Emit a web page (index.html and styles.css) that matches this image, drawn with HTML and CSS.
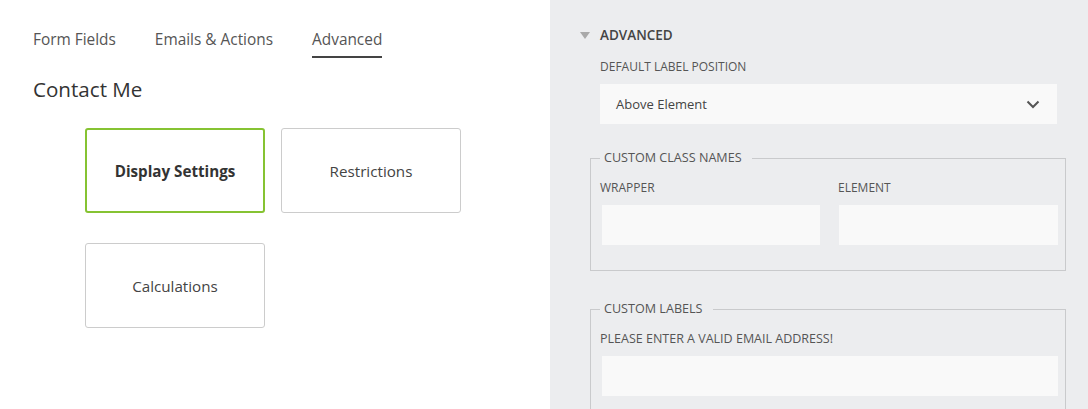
FILE: index.html
```html
<!DOCTYPE html>
<html>
<head>
<meta charset="utf-8">
<link rel="stylesheet" href="styles.css">
</head>
<body>
<div class="page">
  <div class="left">
    <nav class="tabs">
      <span class="tab">Form Fields</span>
      <span class="tab">Emails &amp; Actions</span>
      <span class="tab active">Advanced</span>
    </nav>
    <h1 class="title">Contact Me</h1>
    <div class="cards">
      <div class="card selected">Display Settings</div>
      <div class="card">Restrictions</div>
      <div class="card">Calculations</div>
    </div>
  </div>
  <div class="right">
    <div class="section-head">
      <span class="tri"></span>
      <span class="section-title">ADVANCED</span>
    </div>
    <div class="body">
      <div class="label">DEFAULT LABEL POSITION</div>
      <div class="select">
        <span>Above Element</span>
        <svg class="chev" width="14" height="9" viewBox="0 0 14 9"><path d="M1.5 1.5 L7 7 L12.5 1.5" fill="none" stroke="#555" stroke-width="2"/></svg>
      </div>
    </div>
    <fieldset class="group">
      <legend>CUSTOM CLASS NAMES</legend>
      <div class="cols">
        <div class="col">
          <div class="label">WRAPPER</div>
          <div class="input"></div>
        </div>
        <div class="col">
          <div class="label">ELEMENT</div>
          <div class="input"></div>
        </div>
      </div>
    </fieldset>
    <fieldset class="group second">
      <legend>CUSTOM LABELS</legend>
      <div class="label wide">PLEASE ENTER A VALID EMAIL ADDRESS!</div>
      <div class="input"></div>
    </fieldset>
  </div>
</div>
</body>
</html>
```

FILE: styles.css
```css
* { box-sizing: border-box; }
html, body { margin: 0; padding: 0; }
body {
  width: 1088px;
  height: 409px;
  overflow: hidden;
  font-family: "Open Sans", "Noto Sans", sans-serif;
  color: #444;
}
.page {
  display: flex;
  height: 409px;
}
.left {
  width: 550px;
  background: #fff;
  padding: 30px 0 0 33px;
}
.tabs {
  display: flex;
  gap: 39px;
}
.tab {
  font-size: 15.4px;
  line-height: 20px;
  color: #555;
  padding-bottom: 6px;
  border-bottom: 2px solid transparent;
}
.tab.active {
  border-bottom-color: #444;
}
.title {
  margin: 18px 0 0 0;
  font-size: 20.6px;
  font-weight: 400;
  line-height: 26px;
  color: #333;
}
.cards {
  display: grid;
  grid-template-columns: 180px 180px;
  column-gap: 16px;
  row-gap: 30px;
  margin: 26px 0 0 52px;
}
.card {
  height: 85px;
  border: 1px solid #ccc;
  border-radius: 3px;
  display: flex;
  align-items: center;
  justify-content: center;
  font-size: 15.2px;
  color: #444;
}
.card.selected {
  border: 2px solid #86c332;
  font-weight: 700;
  color: #333;
}
.right {
  flex: 1;
  background: #ecedef;
  padding: 26px 22px 0 30px;
}
.section-head {
  display: flex;
  align-items: center;
  height: 18px;
}
.tri {
  width: 0;
  height: 0;
  border-left: 5px solid transparent;
  border-right: 5px solid transparent;
  border-top: 7px solid #a9a9a9;
  margin-right: 10px;
}
.section-title {
  font-size: 13.5px;
  font-weight: 600;
  color: #444;
}
.body {
  padding-left: 20px;
  margin-top: 15px;
}
.label {
  font-size: 12px;
  line-height: 16px;
  color: #555;
}
.label.wide { font-size: 12.5px; }
.select {
  margin-top: 9px;
  width: 457px;
  height: 40px;
  background: #f9f9f9;
  display: flex;
  align-items: center;
  justify-content: space-between;
  padding: 0 17px 0 16px;
  font-size: 13px;
  color: #444;
}
.chev { display: block; }
.group {
  margin: 27px 0 0 10px;
  width: 476px;
  border: 1px solid #c9cacc;
  padding: 15px 8px 25px 9px;
  min-width: 0;
}
.group legend {
  font-size: 12.6px;
  line-height: 14px;
  color: #555;
  padding: 0 10px 0 4px;
  margin: 0;
}
.cols {
  display: flex;
  gap: 18px;
}
.col { flex: 1; }
.col:first-child .input { margin-left: 2px; width: 218px; }
.col:last-child .input { margin-left: 1px; width: 219px; }
.input {
  margin-top: 9px;
  height: 40px;
  background: #f9f9f9;
}
.group.second {
  margin-top: 31px;
  padding-top: 15px;
}
.group.second .input {
  margin-left: 2px;
  width: 456px;
}
```
